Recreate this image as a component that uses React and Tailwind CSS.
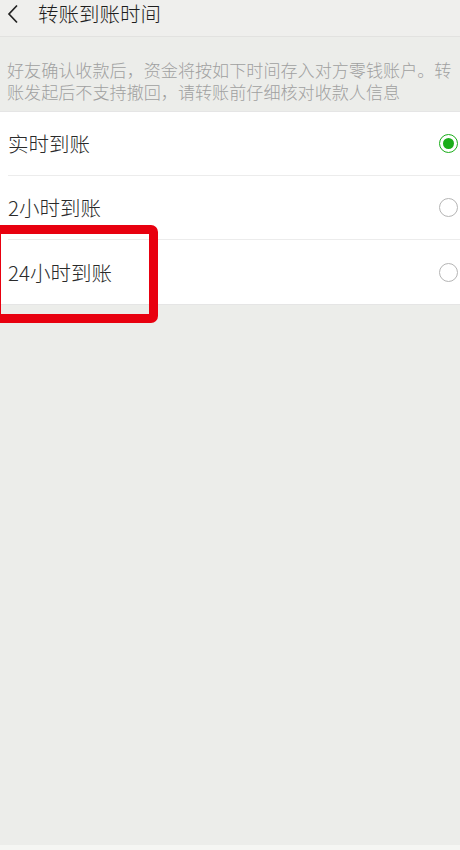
import React from 'react'

const font = { fontFamily: '"Noto Sans CJK SC", "Noto Sans", sans-serif' }

const options = [
  { label: '实时到账', checked: true },
  { label: '2小时到账', checked: false },
  { label: '24小时到账', checked: false },
]

function Radio({ checked }) {
  if (checked) {
    return (
      <div className="w-[19px] h-[19px] rounded-full border-[1.5px] border-[#1aad19] flex items-center justify-center">
        <div className="w-[11px] h-[11px] rounded-full bg-[#1aad19]"></div>
      </div>
    )
  }
  return <div className="w-[19px] h-[19px] rounded-full border-[1.5px] border-[#b5b5b5]"></div>
}

export default function App() {
  return (
    <div className="relative w-[460px] h-[850px] bg-[#ecedea] flex flex-col overflow-hidden" style={font}>
      {/* header */}
      <div className="h-[37px] bg-[#efefed] border-b border-[#e2e2e0] flex items-start pt-[2px]">
        <div className="w-[38px] pl-[7px] pt-[2px] flex items-center">
          <svg width="12" height="20" viewBox="0 0 12 20" fill="none">
            <path d="M10 1.5 L2 10 L10 18.5" stroke="#222" strokeWidth="1.7" />
          </svg>
        </div>
        <div className="text-[20.5px] leading-[22px] font-light text-[#1e1e1e]">转账到账时间</div>
      </div>

      {/* description */}
      <div className="px-[7px] pt-[22px] pb-[4px] text-[17.1px] leading-[22px] font-light text-[#a0a0a0] whitespace-nowrap">
        <div>好友确认收款后，资金将按如下时间存入对方零钱账户。转</div>
        <div>账发起后不支持撤回，请转账前仔细核对收款人信息</div>
      </div>

      {/* options */}
      <div className="mt-[4px] bg-white border-t border-[#e5e5e5] border-b">
        {options.map((o, i) => (
          <div key={o.label} className="pl-[8px]">
            <div
              className={
                'h-[64px] flex items-center justify-between pr-[2px] ' +
                (i < options.length - 1 ? 'border-b border-[#ececec]' : '')
              }
            >
              <span className="text-[20.5px] font-light text-[#2a2a2a]">{o.label}</span>
              <Radio checked={o.checked} />
            </div>
          </div>
        ))}
      </div>

      <div className="flex-1"></div>
      <div className="h-[5px] bg-[#f5f6f3]"></div>

      {/* red annotation box */}
      <div className="absolute left-[-8px] top-[225px] w-[166px] h-[98px] border-[9px] border-[#e8000f] rounded-[7px]"></div>
    </div>
  )
}
